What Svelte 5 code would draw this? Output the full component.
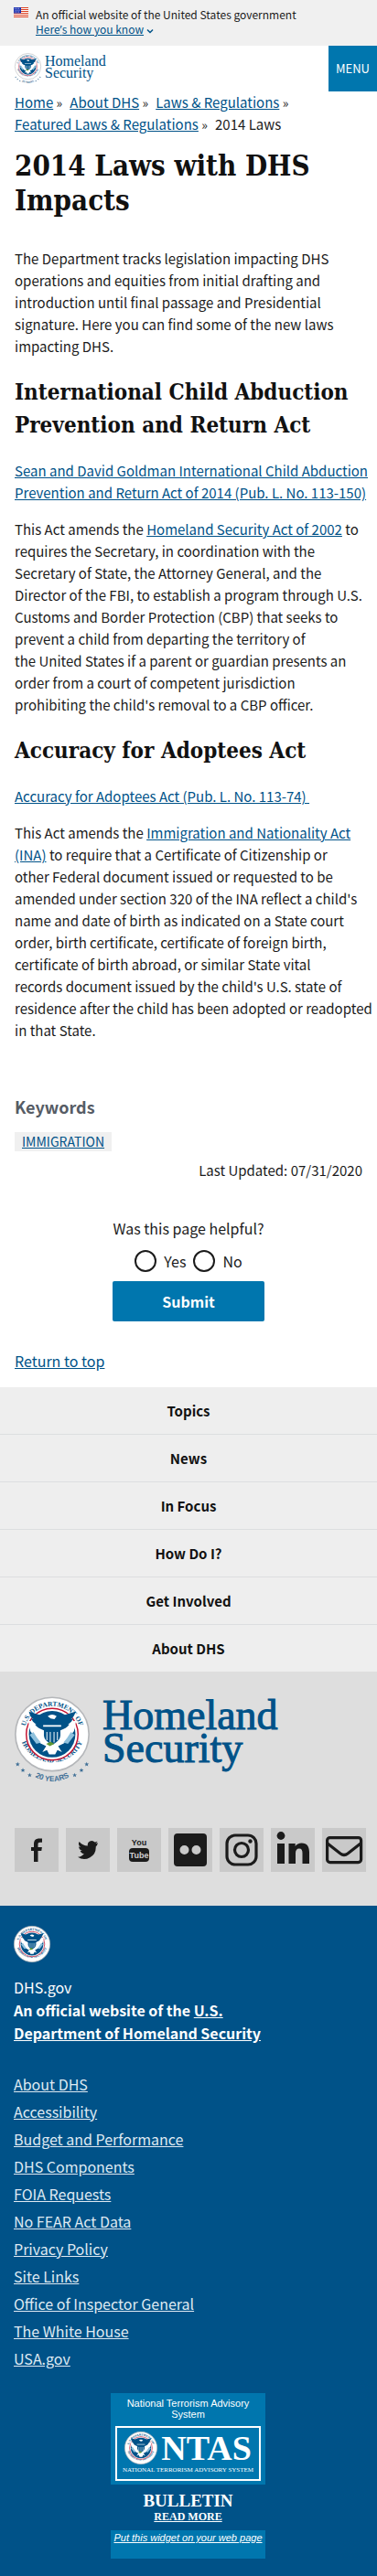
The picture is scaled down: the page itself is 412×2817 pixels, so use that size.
<script>
  const crumbs = ['Home', 'About DHS', 'Laws & Regulations', 'Featured Laws & Regulations'];
  const topics = ['Topics', 'News', 'In Focus', 'How Do I?', 'Get Involved', 'About DHS'];
  const siteLinks = [
    'About DHS',
    'Accessibility',
    'Budget and Performance',
    'DHS Components',
    'FOIA Requests',
    'No FEAR Act Data',
    'Privacy Policy',
    'Site Links',
    'Office of Inspector General',
    'The White House',
    'USA.gov'
  ];
  const social = ['Facebook', 'Twitter', 'YouTube', 'Flickr', 'Instagram', 'LinkedIn', 'Email'];
  const stars = [[4, 90], [11, 98], [20, 104.5], [80, 104.5], [89, 98], [96, 90]];
  let helpful = $state('');
</script>

{#snippet seal(id, years)}
  <svg class="seal" viewBox={years ? '0 0 100 116' : '0 0 100 100'} aria-hidden="true">
    <defs>
      <path id="{id}-upper" d="M13.400 57A37.300 37.300 0 1 1 86.600 57" />
      <path id="{id}-lower" d="M6.500 47A43.600 43.600 0 0 0 93.500 47" />
      <path id="{id}-years" d="M0 84Q50 142 100 84" />
    </defs>
    <circle cx="50" cy="50" r="49" fill="#fff" stroke="#b5b7ba" stroke-width="2" />
    <text class="ring"><textPath href="#{id}-upper" startOffset="50%" text-anchor="middle">U.S. DEPARTMENT OF</textPath></text>
    <text class="ring"><textPath href="#{id}-lower" startOffset="50%" text-anchor="middle">HOMELAND SECURITY</textPath></text>
    <circle cx="50" cy="50" r="34.500" fill="#fff" stroke="#c41230" stroke-width="1.800" />
    <circle cx="50" cy="50" r="31" fill="#005288" />
    <path fill="#fff" d="M18 32 40 35h20l22-3-3 14-13 16-8 4 5 8-6-3-3 6h-8l-3-6-6 3 5-8-8-4-13-16z" />
    <path fill="#005288" d="M19 20l17 5 6 4c2-5 5-7 9-7 5 0 8 3 9 7l4-4 17-5c-1 5-3 8-6 10l3-1c-2 4-4 6-7 8l2 0c-3 4-7 6-12 8H39c-5-2-9-4-12-8h2c-3-2-5-4-7-8l3 1c-3-2-5-5-6-10z" />
    <path fill="#fff" d="M44 26q6-4 12 0l-3 4-5-1zM38 38h24v2H38z" />
    <path fill="#005288" d="M39 41h22v10c0 6-5 10-11 13-6-3-11-7-11-13z" />
    <path stroke="#fff" stroke-width="1.200" d="M43 47v11m4.500-11v14m5-14v14M57 47v11" />
    <path fill="#8fc1dd" d="m20 51 5-4 5 8 5 6-6 2zM80 51l-5-4-5 8-5 6 6 2z" />
    <path fill="#5e9732" d="m42 63 6-3 5 3-6 3z" />
    {#if years}
      {#each stars as [x, y]}
        <path fill="#3f6f96" transform="translate({x} {y})" d="M0-3 .8-.9 3-.8 1.300.5 1.900 2.700 0 1.500-1.900 2.700-1.300.5-3-.8-.8-.9z" />
      {/each}
      <text class="years"><textPath href="#{id}-years" startOffset="50%" text-anchor="middle">20 YEARS</textPath></text>
    {/if}
  </svg>
{/snippet}

{#snippet logo(id)}
  <a class="logo {id}" href="#home" aria-label="Homeland Security home">
    {@render seal(id, true)}
    <span>Homeland<br />Security</span>
  </a>
{/snippet}

<div class="page" id="top">
  <div class="banner">
    <svg class="flag" viewBox="0 0 16 11" aria-hidden="true">
      <path fill="#fff" d="M0 0h16v11H0z" />
      <path stroke="#db3e1f" stroke-width="1" d="M0 .5h16M0 2.500h16M0 4.500h16M0 6.500h16M0 8.500h16M0 10.500h16" />
      <path fill="#1e33b1" d="M0 0h8v6.500H0z" />
      <path stroke="#fff" stroke-width=".7" stroke-dasharray="1 1" d="M1 1.300h6M1.500 3.200h6M1 5.100h6" />
    </svg>
    <div>
      An official website of the United States government<br />
      <a href="#know">Here<span class="mark">’</span>s how you know</a>
      <svg class="chevron" viewBox="0 0 8 6" aria-hidden="true"><path fill="none" stroke="#005288" stroke-width="1.500" d="m1 1.500 3 3 3-3" /></svg>
    </div>
  </div>

  <header>
    {@render logo('head')}
    <button class="menu" type="button">MENU</button>
  </header>

  <main>
    <nav class="crumbs" aria-label="Breadcrumb">
      {#each crumbs as crumb}
        <span><a href="#crumb">{crumb}</a> <i>»</i></span>
      {/each}
      <span>2014 Laws</span>
    </nav>

    <h1>2014 Laws with DHS Impacts</h1>

    <article>
      <p>The Department tracks legislation impacting DHS operations and equities from initial drafting and introduction until final passage and Presidential signature. Here you can find some of the new laws impacting DHS.</p>
      <h2>International Child Abduction Prevention and Return Act</h2>
      <p><a href="#goldman"><span class="keep">Sean and David Goldman International Child Abduction</span> <span class="keep">Prevention and Return Act of 2014 (Pub. L. No. 113-150)</span></a></p>
      <p>This Act amends the <a href="#hsa">Homeland Security Act of 2002</a> to requires the Secretary, in coordination with the Secretary of State, the Attorney General, and the Director of the FBI, to establish a program through U.S. Customs and Border Protection (CBP) that seeks to prevent a child from departing the territory of the&nbsp;United&nbsp;States if a parent or guardian presents an order from a court of competent jurisdiction prohibiting the child's removal to a CBP officer.</p>
      <h2>Accuracy for Adoptees Act</h2>
      <p><a href="#adoptees">Accuracy for Adoptees Act (Pub. L. No. 113-74)&nbsp;</a></p>
      <p>This Act amends the <a href="#ina">Immigration and Nationality Act (INA)</a> to require that a Certificate of Citizenship or other Federal document issued or requested to be amended under section 320 of the INA reflect a child's name and date of birth as indicated on a State court order, birth certificate, certificate of foreign birth, certificate of birth abroad, or similar State vital <span class="keep">records document</span> issued by the child's U.S. state of <span class="keep">residence after the child has been adopted or readopted</span> in&nbsp;that&nbsp;State.</p>
    </article>

    <section class="keywords">
      <h3>Keywords</h3>
      <a href="#immigration">IMMIGRATION</a>
    </section>
    <div class="updated">Last Updated: 07/31/2020</div>

    <form onsubmit={(e) => e.preventDefault()}>
      <fieldset>
        <legend>Was this page helpful?</legend>
        <div class="choices">
          <label><input type="radio" name="helpful" value="yes" bind:group={helpful} />Yes</label>
          <label><input type="radio" name="helpful" value="no" bind:group={helpful} />No</label>
        </div>
      </fieldset>
      <button type="submit">Submit</button>
    </form>

    <a class="return" href="#top">Return to top</a>
  </main>

  <footer>
    <nav class="topics" aria-label="Footer">
      {#each topics as topic}<a href="#topic">{topic}</a>{/each}
    </nav>

    <div class="brand">
      {@render logo('foot')}
      <div class="social">
        {#each social as name}
          <a href="#social" aria-label={name}>
            <svg viewBox="0 0 48 48" fill="#1b1b1b" aria-hidden="true">
              {#if name === 'Facebook'}
                <path d="M21 37V25h-3v-4h3v-3.500c0-4 2-6 6-6h3v4.200h-2.300c-1.700 0-2.200.7-2.200 2.200V21h4.400l-.6 4h-3.800v12z" />
              {:else if name === 'Twitter'}
                <path d="M35 16.200a9 9 0 0 1-2.500.7 4.500 4.500 0 0 0 1.900-2.500 9 9 0 0 1-2.800 1.100 4.500 4.500 0 0 0-7.700 4.100 12.700 12.700 0 0 1-9.200-4.700 4.500 4.500 0 0 0 1.400 6 4.400 4.400 0 0 1-2-.6c0 2.200 1.500 4.100 3.600 4.500a4.500 4.500 0 0 1-2 .1 4.500 4.500 0 0 0 4.200 3.100A9 9 0 0 1 13 31.800 12.700 12.700 0 0 0 32.700 20.500a9 9 0 0 0 2.300-4.300z" />
              {:else if name === 'YouTube'}
                <text x="24" y="19" class="tube">You</text>
                <rect x="13" y="22" width="22" height="15" rx="4" />
                <text x="24" y="33" class="tube light">Tube</text>
              {:else if name === 'Flickr'}
                <path fill-rule="evenodd" d="M10 6h28q4 0 4 4v28q0 4-4 4H10q-4 0-4-4V10q0-4 4-4zm7.500 13a5 5 0 1 0 0 10 5 5 0 0 0 0-10zm13 0a5 5 0 1 0 0 10 5 5 0 0 0 0-10z" />
              {:else if name === 'Instagram'}
                <g fill="none" stroke="#1b1b1b" stroke-width="3.200">
                  <rect x="8" y="8" width="32" height="32" rx="9" />
                  <circle cx="24" cy="24" r="7.500" />
                </g>
                <circle cx="33.500" cy="14.500" r="2.200" />
              {:else if name === 'LinkedIn'}
                <circle cx="11" cy="8.500" r="4.400" />
                <path d="M7 17h8v22H7zm12.500 0h7.200v3c1.400-2.300 3.800-3.600 7-3.600 6 0 8.300 4 8.300 10V39h-7.500V27.500c0-3.200-1-5-3.500-5-2.800 0-4 2-4 5V39h-7.500z" />
              {:else}
                <g fill="none" stroke="#1b1b1b" stroke-width="3.200">
                  <rect x="5.600" y="10.600" width="37" height="27" rx="3" />
                  <path d="m6 17 14 11q4 3 8 0l14-11" />
                </g>
              {/if}
            </svg>
          </a>
        {/each}
      </div>
    </div>

    <div class="identifier">
      <div class="mini">{@render seal('gov', false)}</div>
      <div class="about">DHS.gov<br /><b>An official website of the <a href="#dhs">U.S. Department of Homeland Security</a></b></div>
      <ul>
        {#each siteLinks as link}<li><a href="#site">{link}</a></li>{/each}
      </ul>
      <aside class="ntas" aria-label="National Terrorism Advisory System">
        <div class="panel">
          <div>National Terrorism Advisory System</div>
          <div class="plate">
            <div class="plate-row">{@render seal('ntas', false)}<strong>NTAS</strong></div>
            <small>NATIONAL TERRORISM ADVISORY SYSTEM</small>
          </div>
        </div>
        <div class="bulletin">BULLETIN<a href="#bulletin">READ MORE</a></div>
        <div class="panel put"><a href="#widget">Put this widget on your web page</a></div>
      </aside>
    </div>
  </footer>
</div>

<style>
  :global(body) { margin: 0; background: #fff; }
  .page { font: 15px/24px "Noto Sans CJK SC", "Open Sans", sans-serif; color: #1b1b1b; }
  a { color: #005288; }
  svg { display: block; overflow: visible; }

  .banner { display: flex; gap: 8px; padding: 8px 16px 9px 15px; background: #f0f0f0; font-size: 12px; line-height: 16px; }
  .flag { width: 16px; height: 11px; flex: none; }
  .mark { font-family: "Noto Sans", sans-serif; }
  .chevron { display: inline-block; width: 8px; height: 6px; }

  header { display: flex; justify-content: space-between; align-items: stretch; height: 50px; padding-left: 16px; }
  .menu { width: 53px; border: 0; padding: 0; background: #0076ae; color: #fff; font: inherit; font-size: 13px; }

  .logo { display: flex; color: #005288; text-decoration: none; font-family: "Liberation Serif", serif; -webkit-text-stroke: 1px #005288; }
  .head { gap: 4px; padding-top: 8px; font-size: 16px; line-height: 13px; -webkit-text-stroke: 0; }
  .head .seal { width: 29px; height: 34px; }
  .head span { padding-top: 2px; }
  .foot { gap: 14px; font-size: 46px; line-height: 36px; }
  .foot span { padding-top: 3px; }
  .foot .seal { width: 82px; height: 96px; }
  .ring { font: bold 9px "Liberation Serif", serif; fill: #005288; -webkit-text-stroke: 0; }
  .years { font: bold 10px "Liberation Sans", sans-serif; fill: #3f6f96; -webkit-text-stroke: 0; }

  main { padding: 0 16px; }
  .crumbs { display: flex; flex-wrap: wrap; column-gap: 8px; }
  .crumbs i { font-style: normal; font-size: 14px; }

  h1, h2 { font-family: "DejaVu Serif Condensed", "DejaVu Serif", serif; font-weight: bold; color: #111; }
  h1 { margin: 14px 0 33px; font-size: 31px; line-height: 38px; }
  h2 { margin: 20px 0; font-size: 24px; line-height: 36px; }
  p { margin: 0 0 16px; }
  .keep { white-space: nowrap; }

  .keywords { margin-top: 59px; }
  h3 { margin: 0 0 14px; font-size: 18px; line-height: 24px; color: #565c65; }
  .keywords a { display: inline-block; padding: 0 8px; background: #f0f0f0; font-size: 14px; line-height: 21px; }
  .updated { margin-top: 8px; text-align: right; }

  form { display: flex; flex-direction: column; align-items: center; margin-top: 39px; font-size: 16px; }
  fieldset { border: 0; margin: 0; padding: 0; text-align: center; }
  legend { padding: 0; margin: 0 auto; }
  .choices { display: flex; justify-content: center; gap: 8px; margin-top: 12px; }
  label { display: flex; align-items: center; gap: 8px; }
  input { appearance: none; width: 24px; height: 24px; margin: 0; border: 2px solid #1b1b1b; border-radius: 50%; background: #fff; }
  input:checked { box-shadow: inset 0 0 0 4px #fff; background: #0076ae; }
  form button { width: 166px; height: 44px; margin-top: 10px; border: 0; border-radius: 2px; background: #0076ae; color: #fff; font: inherit; font-weight: bold; }
  .return { display: block; width: max-content; margin: 31px 0 17px; font-size: 16px; }

  .topics a { display: block; padding: 14px 0 13px; border-bottom: 1px solid #dcdee0; background: #eee; color: #111; font-weight: bold; text-align: center; text-decoration: none; }
  .topics a:last-child { border: 0; }

  .brand { padding: 27px 12px 37px 16px; background: #dedede; }
  .social { display: flex; gap: 8px; margin-top: 48px; }
  .social a { flex: 0 1 48px; background: #c9c9c9; }
  .tube { font: bold 9px "Liberation Sans", sans-serif; text-anchor: middle; }
  .light { fill: #d0d0d0; }

  .identifier { padding: 22px 16px 19px 15px; background: #005288; color: #fff; font-size: 16px; line-height: 25px; }
  .mini .seal { width: 40px; height: 40px; }
  .about { max-width: 280px; margin-top: 15px; }
  .about a { color: #fff; }
  ul { margin: 28px 0 0; padding: 0; list-style: none; line-height: 30px; }
  ul a { color: #dfe9f2; }

  .ntas { width: 169px; margin: 23px auto 0; font: 11px/12px "Liberation Sans", sans-serif; text-align: center; }
  .panel { padding: 5px 5px 4px; background: #0076ae; }
  .plate { margin-top: 7px; padding: 4px 4px 3px; border: 2px solid #fff; font-family: "Liberation Serif", serif; }
  .plate-row { display: flex; align-items: center; justify-content: center; gap: 4px; }
  .plate .seal { width: 36px; height: 36px; }
  strong { font-size: 38px; line-height: 36px; }
  small { display: block; white-space: nowrap; font-size: 7px; line-height: 13px; }
  .bulletin { display: flex; flex-direction: column; align-items: center; height: 50px; box-sizing: border-box; padding-top: 8px; font: bold 19px/20px "Liberation Serif", serif; }
  .bulletin a { color: #fff; font-size: 12px; line-height: 15px; }
  .put { padding: 2px 0 17px; font-style: italic; white-space: nowrap; }
  .put a { color: #fff; }
</style>
